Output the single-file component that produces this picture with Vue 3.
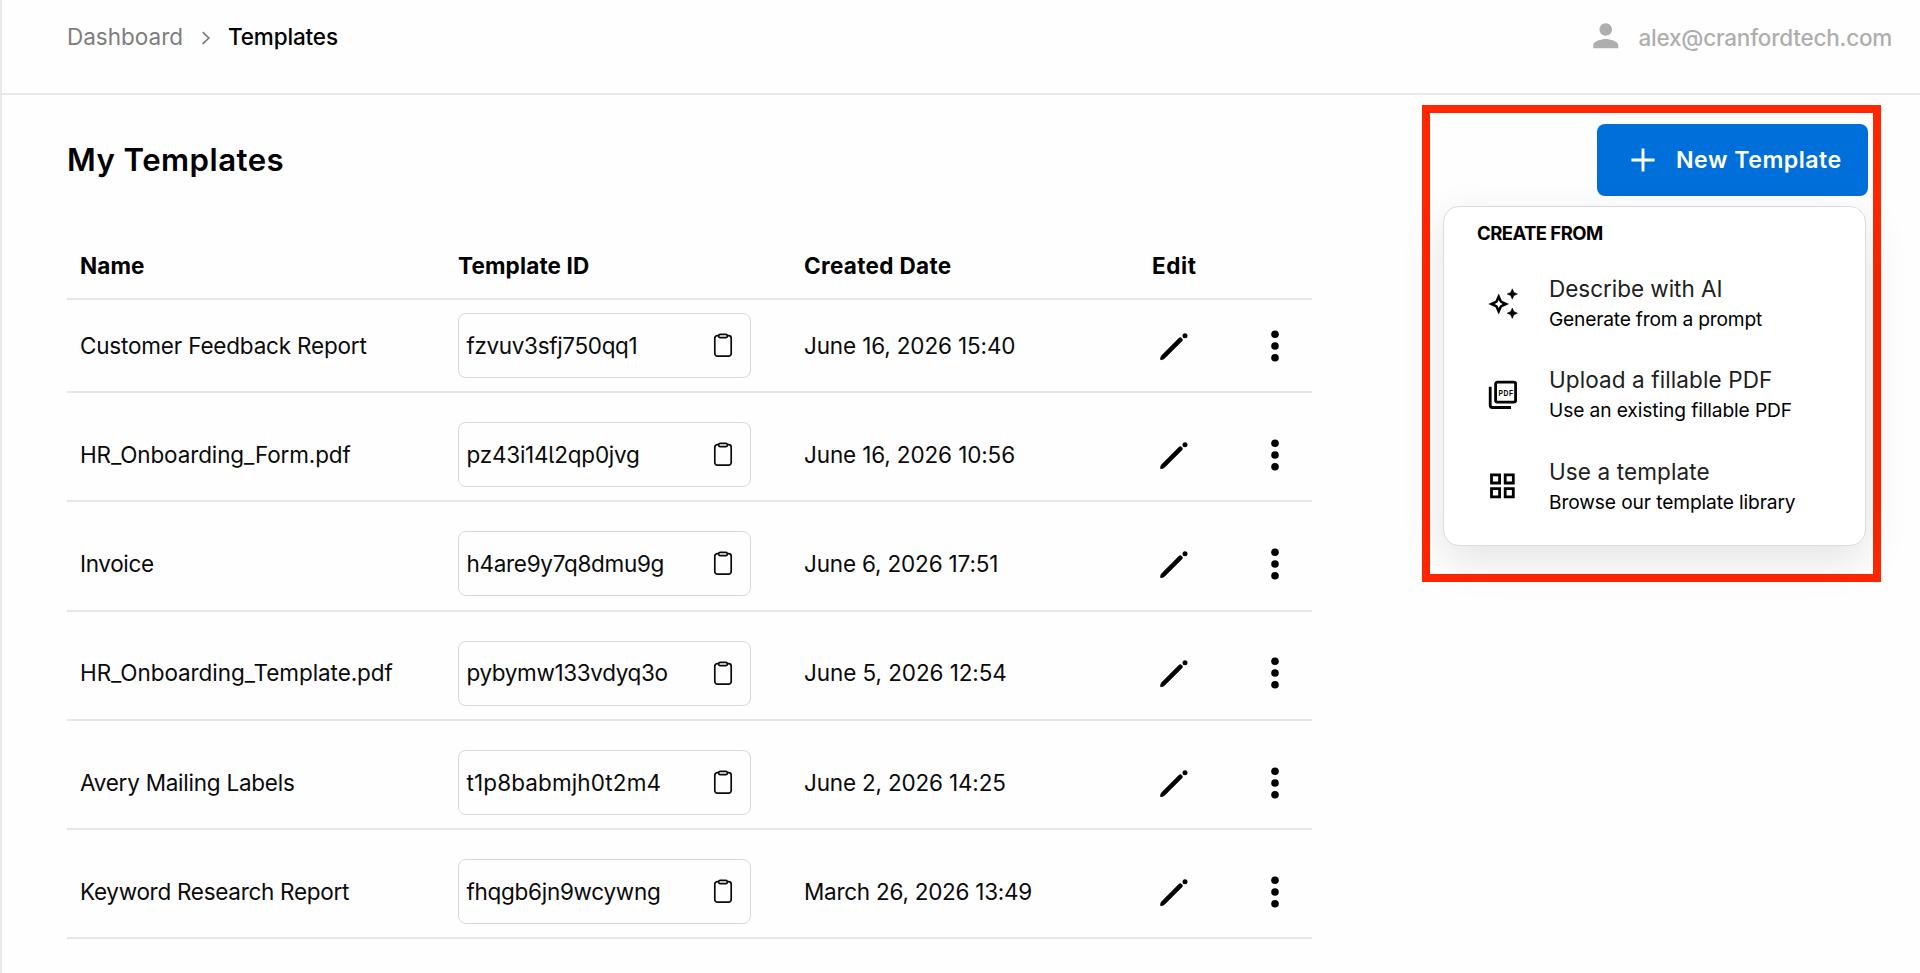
<script setup>
const rows = [
  { name: 'Customer Feedback Report', nameGap: -0.187, id: 'fzvuv3sfj750qq1', idGap: -0.346, date: 'June 16, 2026 15:40', dateGap: -0.14 },
  { name: 'HR_Onboarding_Form.pdf', nameGap: -0.123, id: 'pz43i14l2qp0jvg', idGap: -0.23, date: 'June 16, 2026 10:56', dateGap: -0.13 },
  { name: 'Invoice', nameGap: -0.334, id: 'h4are9y7q8dmu9g', idGap: -0.3, date: 'June 6, 2026 17:51', dateGap: -0.17 },
  { name: 'HR_Onboarding_Template.pdf', nameGap: -0.074, id: 'pybymw133vdyq3o', idGap: -0.37, date: 'June 5, 2026 12:54', dateGap: -0.08 },
  { name: 'Avery Mailing Labels', nameGap: -0.245, id: 't1p8babmjh0t2m4', idGap: 0.115, date: 'June 2, 2026 14:25', dateGap: -0.18 },
  { name: 'Keyword Research Report', nameGap: -0.287, id: 'fhqgb6jn9wcywng', idGap: -0.279, date: 'March 26, 2026 13:49', dateGap: -0.26 }
]
const options = [
  { icon: 'sparkle', title: 'Describe with AI', titleGap: -0.031, text: 'Generate from a prompt', textGap: -0.205 },
  { icon: 'pdf', title: 'Upload a fillable PDF', titleGap: 0.1, text: 'Use an existing fillable PDF', textGap: -0.11 },
  { icon: 'grid', title: 'Use a template', titleGap: 0.116, text: 'Browse our template library', textGap: -0.12 }
]
const spacing = (gap) => ({ letterSpacing: gap + 'px' })
</script>

<template>
  <div class="page">
    <header class="topbar">
      <nav class="crumbs">
        <a class="crumb">Dashboard</a>
        <svg class="chevron" width="10" height="14" viewBox="0 0 10 14"><path d="M1.7 1.2 7.8 7 1.7 12.8" /></svg>
        <span class="crumb current">Templates</span>
      </nav>
      <div class="account">
        <svg width="37.5" height="37.5" viewBox="0 0 24 24"><path d="M12 12c2.21 0 4-1.79 4-4s-1.79-4-4-4-4 1.79-4 4 1.79 4 4 4zm0 2c-2.67 0-8 1.34-8 4v2h16v-2c0-2.66-5.33-4-8-4z" /></svg>
        <span>alex@cranfordtech.com</span>
      </div>
    </header>

    <main class="content">
      <section class="list">
        <h1>My Templates</h1>
        <div class="grid head">
          <span class="h-name">Name</span>
          <span class="h-id">Template ID</span>
          <span class="h-date">Created Date</span>
          <span class="h-edit">Edit</span>
          <span></span>
        </div>
        <div v-for="row in rows" :key="row.id" class="grid row">
          <span class="name" :style="spacing(row.nameGap)">{{ row.name }}</span>
          <div class="idbox">
            <span class="code" :style="spacing(row.idGap)">{{ row.id }}</span>
            <svg width="20" height="25" viewBox="0 0 20 25" class="clip">
              <path d="M5.6 2.7H4.4A2.6 2.6 0 0 0 1.8 5.3V20.6A2.6 2.6 0 0 0 4.4 23.2H15.6A2.6 2.6 0 0 0 18.2 20.6V5.3A2.6 2.6 0 0 0 15.6 2.7H14.4" />
              <rect x="5.7" y="1.3" width="8.6" height="3.4" rx="1.5" />
            </svg>
          </div>
          <span class="date" :style="spacing(row.dateGap)">{{ row.date }}</span>
          <svg class="pencil" width="30" height="30" viewBox="0 0 30 30">
            <path d="M1.5 28.6Q1 26.2 3 24.2L20.1 7.1Q21.3 6 22.6 7.2L22.9 7.5Q24.1 8.8 23 10L5.9 27.1Q3.9 29.1 1.5 28.6Z" />
            <circle cx="26" cy="4.7" r="2.5" />
          </svg>
          <svg class="dots" width="10" height="34" viewBox="0 0 10 34">
            <circle cx="5" cy="5.2" r="3.8" /><circle cx="5" cy="17" r="3.8" /><circle cx="5" cy="28.7" r="3.8" />
          </svg>
        </div>
      </section>

      <aside class="highlight">
        <button class="new">
          <svg width="24" height="24" viewBox="0 0 24 24"><path d="M12 .4V23.6M.4 12H23.6" /></svg>
          <span>New Template</span>
        </button>
        <div class="menu">
          <div class="label">CREATE FROM</div>
          <div v-for="option in options" :key="option.icon" class="option">
            <svg v-if="option.icon === 'sparkle'" width="32" height="32" viewBox="0 0 32 32">
              <path fill-rule="evenodd" d="M12.7 5.6 15.9 12.8 23.1 16 15.9 19.2 12.7 26.4 9.5 19.2 2.3 16 9.5 12.8ZM12.7 12 11.3 14.6 8.7 16 11.3 17.4 12.7 20 14.1 17.4 16.7 16 14.1 14.6Z" />
              <path d="M26.3.8 27.9 4.4 31.5 6 27.9 7.6 26.3 11.2 24.7 7.6 21.1 6 24.7 4.4ZM26.3 20 27.9 23.6 31.5 25.2 27.9 26.8 26.3 30.4 24.7 26.8 21.1 25.2 24.7 23.6Z" class="bold" />
            </svg>
            <svg v-else-if="option.icon === 'pdf'" width="32" height="32" viewBox="0 0 32 32">
              <rect class="line" x="9.6" y="3.1" width="20" height="20" rx="1.8" />
              <path class="line" d="M4.2 7.7V26.3A2.2 2.2 0 0 0 6.4 28.5H25" />
              <text transform="translate(12.4 16.8) scale(.68 1)" letter-spacing="0.9">PDF</text>
            </svg>
            <svg v-else width="32" height="32" viewBox="0 0 32 32">
              <path class="line" d="M5.5 4.9H13.6V13H5.5ZM19.2 4.9H27.3V13H19.2ZM5.5 18.7H13.6V26.8H5.5ZM19.2 18.7H27.3V26.8H19.2Z" />
            </svg>
            <div class="words">
              <div class="title" :style="spacing(option.titleGap)">{{ option.title }}</div>
              <div class="text" :style="spacing(option.textGap)">{{ option.text }}</div>
            </div>
          </div>
        </div>
      </aside>
    </main>
  </div>
</template>

<style>
body { background: #fefefe; }
</style>

<style scoped>
.page {
  box-sizing: border-box;
  width: 100%;
  height: 973px;
  overflow: hidden;
  border-left: 2px solid #e8e8e8;
  font-family: Inter, "Liberation Sans", sans-serif;
  font-size: 22.5px;
  color: #0a0a0a;
  white-space: nowrap;
}
.page * { box-sizing: border-box; }
svg { flex: none; display: block; }
.topbar {
  height: 95px;
  padding: 16px 28px 0 65px;
  border-bottom: 2px solid #e8e8e8;
  display: flex;
  justify-content: space-between;
  align-items: flex-start;
}
.crumbs { display: flex; align-items: center; height: 41px; }
.crumb { color: #7d7d7d; width: 134px; }
.crumb.current { color: #000; font-weight: 500; letter-spacing: -0.15px; width: auto; }
.chevron { margin: 2px 17px 0 0; }
.chevron path { fill: none; stroke: #7a7a7a; stroke-width: 1.7; }
.account {
  display: flex;
  align-items: center;
  gap: 14px;
  height: 43px;
  color: #aeaeae;
  font-weight: 500;
  letter-spacing: -0.23px;
}
.account svg { fill: #aeaeae; margin-top: -3px; }
.content {
  display: flex;
  justify-content: space-between;
  align-items: flex-start;
  padding: 10px 39px 0 65px;
}
.list { width: 1245px; }
h1 {
  margin: 34px 0 0;
  height: 42px;
  line-height: 42px;
  font-size: 31.2px;
  font-weight: 600;
  letter-spacing: 0.45px;
  color: #000;
}
.grid {
  display: grid;
  grid-template-columns: 391px 346px 348px 103px 1fr;
  align-items: center;
  border-bottom: 2px solid #e6e6e6;
}
.head {
  height: 119px;
  padding-top: 51px;
  font-size: 22.5px;
  font-weight: 700;
  color: #000;
}
.h-name { padding-left: 13px; letter-spacing: 0.1px; }
.h-id { letter-spacing: 0.14px; }
.h-date { letter-spacing: 0.32px; }
.h-edit { letter-spacing: 0.63px; }
.row { height: 109.3px; padding-top: 16px; }
.head + .row { height: 93px; padding-top: 0; }
.name, .code, .date { padding-bottom: 1px; }
.name { padding-left: 13px; }
.idbox {
  display: flex;
  align-items: center;
  justify-content: space-between;
  width: 293px;
  height: 65px;
  padding: 0 17px 0 7.5px;
  border: 1.5px solid #d8d8d8;
  border-radius: 8px;
}
.code { font-feature-settings: "cv05"; }
.clip { fill: none; stroke: #0a0a0a; stroke-width: 1.7; }
.pencil { margin-left: 6.5px; }
.pencil path { stroke: #000; stroke-width: 0.6; }
.dots { margin-left: 14.5px; }
.pencil, .dots { fill: #000; }
.highlight {
  width: 459px;
  height: 477px;
  border: 8px solid #ff2600;
  padding: 11px 5px 0 13px;
  display: flex;
  flex-direction: column;
  align-items: flex-end;
}
.new {
  display: flex;
  align-items: center;
  gap: 21px;
  width: 271px;
  height: 71.5px;
  padding: 0 0 0 34px;
  border: 0;
  border-radius: 8px;
  background: #006fd9;
  color: #fff;
  font: 600 23.2px Inter, sans-serif;
  letter-spacing: 0.49px;
}
.new svg { stroke: #fff; stroke-width: 2.9; fill: none; }
.menu {
  width: 423px;
  height: 340px;
  margin: 10px 2px 0 0;
  padding: 11px 0 0 33px;
  border: 1.5px solid #dcdcdc;
  border-radius: 16px;
  background: #fff;
  box-shadow: 0 14px 44px rgba(0, 0, 0, 0.11);
}
.label { height: 40.5px; line-height: 30px; font-size: 18.5px; font-weight: 700; letter-spacing: -0.55px; color: #000; }
.option { display: flex; align-items: center; height: 91.3px; padding-left: 9px; gap: 31px; color: #000; }
.option svg { fill: #000; }
.option .line { fill: none; stroke: #000; stroke-width: 2.8; }
.option .bold { stroke: #000; stroke-width: 0.5; }
.option text { font: 700 9.8px "Liberation Sans", sans-serif; }
.title { height: 31px; line-height: 31px; color: #202020; }
.text { height: 30px; line-height: 30px; font-size: 19.2px; }
</style>
